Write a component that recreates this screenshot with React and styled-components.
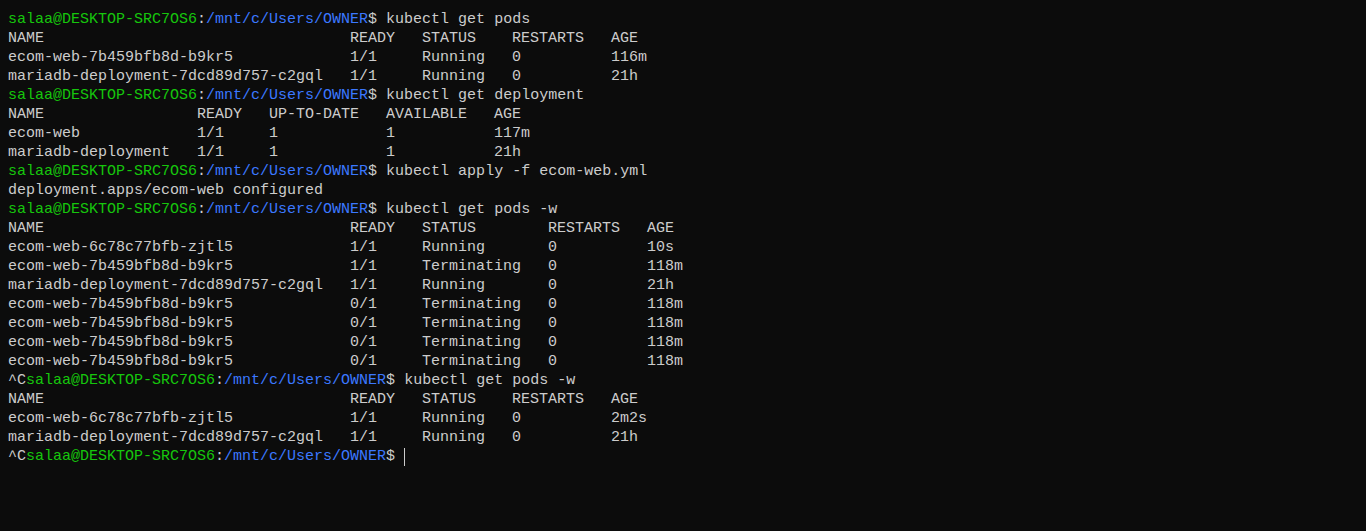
import React from 'react';
import styled, { createGlobalStyle } from 'styled-components';

const GlobalStyle = createGlobalStyle`
  html, body {
    margin: 0;
    padding: 0;
    background: #0c0c0c;
  }
`;

// terminal window
const Terminal = styled.div`
  width: 1366px;
  height: 531px;
  box-sizing: border-box;
  background: #0c0c0c;
  padding: 10px 8px 0 8px;
  font-family: "Liberation Mono", "DejaVu Sans Mono", monospace;
  font-size: 15px;
  line-height: 19px;
  color: #cccccc;
  overflow: hidden;
`;

const Line = styled.div`
  white-space: pre;
  height: 19px;
  display: flex;
  align-items: center;
`;

const Host = styled.span`
  color: #16c60c;
`;

const Path = styled.span`
  color: #3b78ff;
`;

const Cursor = styled.span`
  display: inline-block;
  width: 1px;
  height: 18px;
  background: #cccccc;
`;

const Prompt = ({ cmd, ctrlC, cursor }) => (
  <Line>
    {ctrlC && '^C'}
    <Host>salaa@DESKTOP-SRC7OS6</Host>:<Path>/mnt/c/Users/OWNER</Path>${' '}
    {cmd}
    {cursor && <Cursor />}
  </Line>
);

const output1 = [
  'NAME                                  READY   STATUS    RESTARTS   AGE',
  'ecom-web-7b459bfb8d-b9kr5             1/1     Running   0          116m',
  'mariadb-deployment-7dcd89d757-c2gql   1/1     Running   0          21h',
];

const output2 = [
  'NAME                 READY   UP-TO-DATE   AVAILABLE   AGE',
  'ecom-web             1/1     1            1           117m',
  'mariadb-deployment   1/1     1            1           21h',
];

const output3 = ['deployment.apps/ecom-web configured'];

const output4 = [
  'NAME                                  READY   STATUS        RESTARTS   AGE',
  'ecom-web-6c78c77bfb-zjtl5             1/1     Running       0          10s',
  'ecom-web-7b459bfb8d-b9kr5             1/1     Terminating   0          118m',
  'mariadb-deployment-7dcd89d757-c2gql   1/1     Running       0          21h',
  'ecom-web-7b459bfb8d-b9kr5             0/1     Terminating   0          118m',
  'ecom-web-7b459bfb8d-b9kr5             0/1     Terminating   0          118m',
  'ecom-web-7b459bfb8d-b9kr5             0/1     Terminating   0          118m',
  'ecom-web-7b459bfb8d-b9kr5             0/1     Terminating   0          118m',
];

const output5 = [
  'NAME                                  READY   STATUS    RESTARTS   AGE',
  'ecom-web-6c78c77bfb-zjtl5             1/1     Running   0          2m2s',
  'mariadb-deployment-7dcd89d757-c2gql   1/1     Running   0          21h',
];

const Output = ({ lines }) => lines.map((l, i) => <Line key={i}>{l}</Line>);

function App() {
  return (
    <>
      <GlobalStyle />
      <Terminal>
        <Prompt cmd="kubectl get pods" />
        <Output lines={output1} />
        <Prompt cmd="kubectl get deployment" />
        <Output lines={output2} />
        <Prompt cmd="kubectl apply -f ecom-web.yml" />
        <Output lines={output3} />
        <Prompt cmd="kubectl get pods -w" />
        <Output lines={output4} />
        <Prompt ctrlC cmd="kubectl get pods -w" />
        <Output lines={output5} />
        <Prompt ctrlC cursor />
      </Terminal>
    </>
  );
}

export default App;
